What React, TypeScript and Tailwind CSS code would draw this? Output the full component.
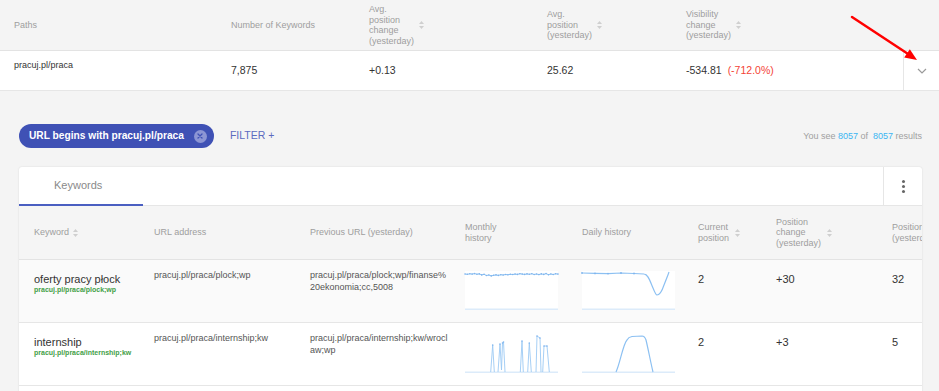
import React from "react";

function SortIcon() {
  return (
    <svg width="5" height="8" viewBox="0 0 5 8" className="shrink-0">
      <path d="M2.5 0 L5 3 L0 3 Z" fill="#cfcfcf" />
      <path d="M2.5 8 L5 5 L0 5 Z" fill="#cfcfcf" />
    </svg>
  );
}

const monthlyYs = [
  2.5, 2.8, 2.3, 2.6, 2.1, 2.7, 2.4, 3.4, 2.8, 4.0, 3.5, 4.4, 3.8, 3.4, 3.9, 3.2, 3.5, 3.0, 3.3, 2.8,
  3.0, 2.6, 2.9, 2.2, 2.6, 2.9, 2.4, 2.8, 2.2, 3.0, 2.5, 3.1, 2.4, 2.9, 2.1, 3.2, 2.5, 3.0, 2.3, 2.6,
];

function ChartBox({ children, white }: { children: React.ReactNode; white?: boolean }) {
  return (
    <div className={`w-[93px] h-[39px] ${white ? "bg-white" : ""}`}>
      <svg width="93" height="39" viewBox="0 0 93 39" overflow="visible">
        <line x1="0" y1="38.2" x2="93" y2="38.2" stroke="#dcebfa" strokeWidth="1.5" />
        {children}
      </svg>
    </div>
  );
}

function MonthlyRow1() {
  const pts = monthlyYs.map((y, i) => [(i * 93) / (monthlyYs.length - 1), y + 0.5]);
  const d = pts.map((p, i) => `${i === 0 ? "M" : "L"}${p[0].toFixed(2)},${p[1]}`).join(" ");
  return (
    <ChartBox white>
      <path d={d} fill="none" stroke="#8cc0f2" strokeWidth="1" />
      {pts.map((p, i) => (
        <circle key={i} cx={p[0]} cy={p[1]} r="0.8" fill="#7fb5ee" />
      ))}
    </ChartBox>
  );
}

function DailyRow1() {
  return (
    <ChartBox white>
      <path
        d="M0,2 L13,2.4 L26,2.6 L39,2 L52,2.5 L62,3 C66,3 68,10 71,17 C73,22 74,24 75,24 C77,24 80,20 82,14 C84,9 86,4 87,1"
        fill="none"
        stroke="#8cc0f2"
        strokeWidth="1.2"
      />
      {[
        [0, 2],
        [13, 2.4],
        [26, 2.6],
        [39, 2],
        [52, 2.5],
      ].map((p, i) => (
        <circle key={i} cx={p[0]} cy={p[1]} r="0.9" fill="#7fb5ee" />
      ))}
    </ChartBox>
  );
}

function MonthlyRow2() {
  const segs = [
    "M25.7,38 L27.7,11 L29.3,38",
    "M33,38 L35,10 L36.5,36 L37.5,9 L38.5,8 L40,38",
    "M55.3,38 L57,7 L58.3,38",
    "M62.7,38 L64.3,9 L66.3,38",
    "M71,38 L72,2 L75,4 L76,38",
    "M77.7,38 L79,12 L82,12 L84.3,38",
  ];
  const dots = [
    [27.7, 11],
    [35, 10],
    [37.5, 9],
    [38.5, 8],
    [57, 7],
    [64.3, 9],
    [72, 2],
    [75, 4],
    [79, 12],
    [82, 12],
  ];
  return (
    <ChartBox>
      {segs.map((s, i) => (
        <path key={i} d={s} fill="none" stroke="#9ccaf4" strokeWidth="0.9" />
      ))}
      {dots.map((p, i) => (
        <circle key={i} cx={p[0]} cy={p[1]} r="0.8" fill="#7fb5ee" />
      ))}
    </ChartBox>
  );
}

function DailyRow2() {
  return (
    <ChartBox>
      <path
        d="M34,38 C38,30 41,10 45,6 C46,4 47,3 50,2.5 L60,2 C62,2 63,3 64,6 C66,14 69,30 71,38"
        fill="none"
        stroke="#8cc0f2"
        strokeWidth="1.2"
      />
    </ChartBox>
  );
}

function TopHeader() {
  return (
    <div className="flex h-[51px] text-[9px] leading-[10.5px] text-[#9e9e9e] border-b border-[#e3e3e3] bg-[#f4f4f4]">
      <div className="w-[231px] pl-[14px] flex items-center">Paths</div>
      <div className="w-[138px] flex items-center">Number of Keywords</div>
      <div className="w-[178px] flex items-center gap-[5px]">
        <div>
          Avg.
          <br />
          position
          <br />
          change
          <br />
          (yesterday)
        </div>
        <SortIcon />
      </div>
      <div className="w-[139px] flex items-center gap-[5px]">
        <div>
          Avg.
          <br />
          position
          <br />
          (yesterday)
        </div>
        <SortIcon />
      </div>
      <div className="flex-1 flex items-center gap-[5px]">
        <div>
          Visibility
          <br />
          change
          <br />
          (yesterday)
        </div>
        <SortIcon />
      </div>
    </div>
  );
}

function TopRow() {
  return (
    <div className="flex h-[40px] bg-white border-b border-[#e6e6e6] text-[#333]">
      <div className="w-[231px] pl-[14px] pt-[9px] text-[9px] leading-[11px]">pracuj.pl/praca</div>
      <div className="w-[138px] flex items-center text-[10.5px]">7,875</div>
      <div className="w-[178px] flex items-center text-[10.5px]">+0.13</div>
      <div className="w-[139px] flex items-center text-[10.5px]">25.62</div>
      <div className="flex-1 flex items-center text-[10.5px]">
        <span>-534.81</span>
        <span className="ml-[6px] text-[#f44336]">(-712.0%)</span>
      </div>
      <div className="w-[36px] border-l border-[#e6e6e6] flex items-center justify-center">
        <svg width="10" height="6" viewBox="0 0 10 6">
          <path d="M1 1 L5 5 L9 1" fill="none" stroke="#9a9a9a" strokeWidth="1.2" />
        </svg>
      </div>
    </div>
  );
}

function FilterBar() {
  return (
    <div className="flex items-center justify-between pl-[19px] pr-[17px] mt-[33px] h-[24px]">
      <div className="flex items-center">
        <div className="h-[24px] rounded-full bg-[#3f51b5] flex items-center pl-[10px] pr-[7px] gap-[10px]">
          <span className="text-white text-[10.2px] font-bold">URL begins with pracuj.pl/praca</span>
          <span className="w-[13px] h-[13px] rounded-full bg-[#8c95d4] flex items-center justify-center">
            <svg width="6" height="6" viewBox="0 0 6 6">
              <path d="M1 1 L5 5 M5 1 L1 5" stroke="#3f51b5" strokeWidth="1.3" strokeLinecap="round" />
            </svg>
          </span>
        </div>
        <span className="ml-[16px] text-[10.5px] text-[#5c6bc0]">FILTER +</span>
      </div>
      <div className="text-[9px] text-[#a0a0a0] pt-[2px]">
        You see <span className="text-[#3bb4f2]">8057</span> of&nbsp; <span className="text-[#3bb4f2]">8057</span> results
      </div>
    </div>
  );
}

const colW = ["w-[120px]", "w-[156px]", "w-[155px]", "w-[117px]", "w-[116px]", "w-[78px]", "w-[116px]"];

function TableHeader() {
  return (
    <div className="flex h-[54px] bg-[#f5f5f5] border-b border-[#e3e3e3] text-[9px] leading-[10.5px] text-[#9e9e9e]">
      <div className={`${colW[0]} pl-[15px] flex items-center gap-[4px]`}>
        <span>Keyword</span>
        <SortIcon />
      </div>
      <div className={`${colW[1]} pl-[15px] flex items-center`}>URL address</div>
      <div className={`${colW[2]} pl-[15px] flex items-center`}>Previous URL (yesterday)</div>
      <div className={`${colW[3]} pl-[15px] flex items-center`}>
        <div>
          Monthly
          <br />
          history
        </div>
      </div>
      <div className={`${colW[4]} pl-[15px] flex items-center`}>Daily history</div>
      <div className={`${colW[5]} pl-[15px] flex items-center gap-[6px]`}>
        <div>
          Current
          <br />
          position
        </div>
        <SortIcon />
      </div>
      <div className={`${colW[6]} pl-[15px] flex items-center gap-[6px]`}>
        <div>
          Position
          <br />
          change
          <br />
          (yesterday)
        </div>
        <SortIcon />
      </div>
      <div className="flex-1 pl-[15px] flex items-center overflow-hidden whitespace-nowrap">
        <div>
          Position
          <br />
          (yesterday)
        </div>
      </div>
    </div>
  );
}

function DataRow({
  keyword,
  link,
  url,
  prev,
  monthly,
  daily,
  cur,
  change,
  yest,
  bg,
}: {
  keyword: string;
  link: string;
  url: string;
  prev: React.ReactNode;
  monthly: React.ReactNode;
  daily: React.ReactNode;
  cur: string;
  change: string;
  yest: string;
  bg: string;
}) {
  return (
    <div className={`flex h-[63px] border-b border-[#e6e6e6] ${bg}`}>
      <div className={`${colW[0]} pl-[15px] pt-[13px]`}>
        <div className="text-[11px] leading-[13px] text-[#333] whitespace-nowrap">{keyword}</div>
        <div className="text-[7px] leading-[8px] text-[#43a047] font-bold whitespace-nowrap">{link}</div>
      </div>
      <div className={`${colW[1]} pl-[15px] pt-[9px] text-[9px] leading-[12px] text-[#555]`}>{url}</div>
      <div className={`${colW[2]} pl-[15px] pr-[4px] pt-[9px] text-[9px] leading-[12px] text-[#555]`}>{prev}</div>
      <div className={`${colW[3]} pl-[15px] pt-[11px]`}>{monthly}</div>
      <div className={`${colW[4]} pl-[15px] pt-[11px]`}>{daily}</div>
      <div className={`${colW[5]} pl-[15px] pt-[13px] text-[11px] leading-[13px] text-[#333]`}>{cur}</div>
      <div className={`${colW[6]} pl-[15px] pt-[13px] text-[11px] leading-[13px] text-[#333]`}>{change}</div>
      <div className="flex-1 pl-[15px] pt-[13px] text-[11px] leading-[13px] text-[#333]">{yest}</div>
    </div>
  );
}

function Card() {
  return (
    <div className="ml-[19px] mr-[17px] mt-[19px] bg-white rounded-t-[3px] shadow-[0_0_2px_rgba(0,0,0,0.12)] overflow-hidden">
      <div className="flex h-[39px] border-b border-[#e6e6e6]">
        <div className="w-[124px] pl-[35px] flex items-center text-[11px] text-[#8a8a8a] border-b-2 border-[#4a5fc1] -mb-px">
          Keywords
        </div>
        <div className="flex-1" />
        <div className="w-[39px] border-l border-[#e6e6e6] flex flex-col items-center justify-center gap-[2px]">
          <span className="w-[3px] h-[3px] rounded-full bg-[#666]" />
          <span className="w-[3px] h-[3px] rounded-full bg-[#666]" />
          <span className="w-[3px] h-[3px] rounded-full bg-[#666]" />
        </div>
      </div>
      <TableHeader />
      <DataRow
        bg="bg-[#fafafa]"
        keyword="oferty pracy płock"
        link="pracuj.pl/praca/plock;wp"
        url="pracuj.pl/praca/plock;wp"
        prev={
          <>
            pracuj.pl/praca/plock;wp/finanse%
            <br />
            20ekonomia;cc,5008
          </>
        }
        monthly={<MonthlyRow1 />}
        daily={<DailyRow1 />}
        cur="2"
        change="+30"
        yest="32"
      />
      <DataRow
        bg="bg-white"
        keyword="internship"
        link="pracuj.pl/praca/internship;kw"
        url="pracuj.pl/praca/internship;kw"
        prev={
          <>
            pracuj.pl/praca/internship;kw/wrocl
            <br />
            aw;wp
          </>
        }
        monthly={<MonthlyRow2 />}
        daily={<DailyRow2 />}
        cur="2"
        change="+3"
        yest="5"
      />
      <div className="h-[40px] bg-white" />
    </div>
  );
}

export default function App() {
  return (
    <div className="relative w-[939px] h-[391px] overflow-hidden bg-[#f4f4f4] font-['Liberation_Sans',Arial,sans-serif]">
      <TopHeader />
      <TopRow />
      <FilterBar />
      <Card />
      <svg className="absolute left-0 top-0 pointer-events-none" width="939" height="391" viewBox="0 0 939 391">
        <line x1="852" y1="17" x2="907" y2="53.3" stroke="#ff0000" strokeWidth="2.5" strokeLinecap="round" />
        <polygon points="917,60 904.2,57.5 909.8,49.2" fill="#ff0000" />
      </svg>
    </div>
  );
}
